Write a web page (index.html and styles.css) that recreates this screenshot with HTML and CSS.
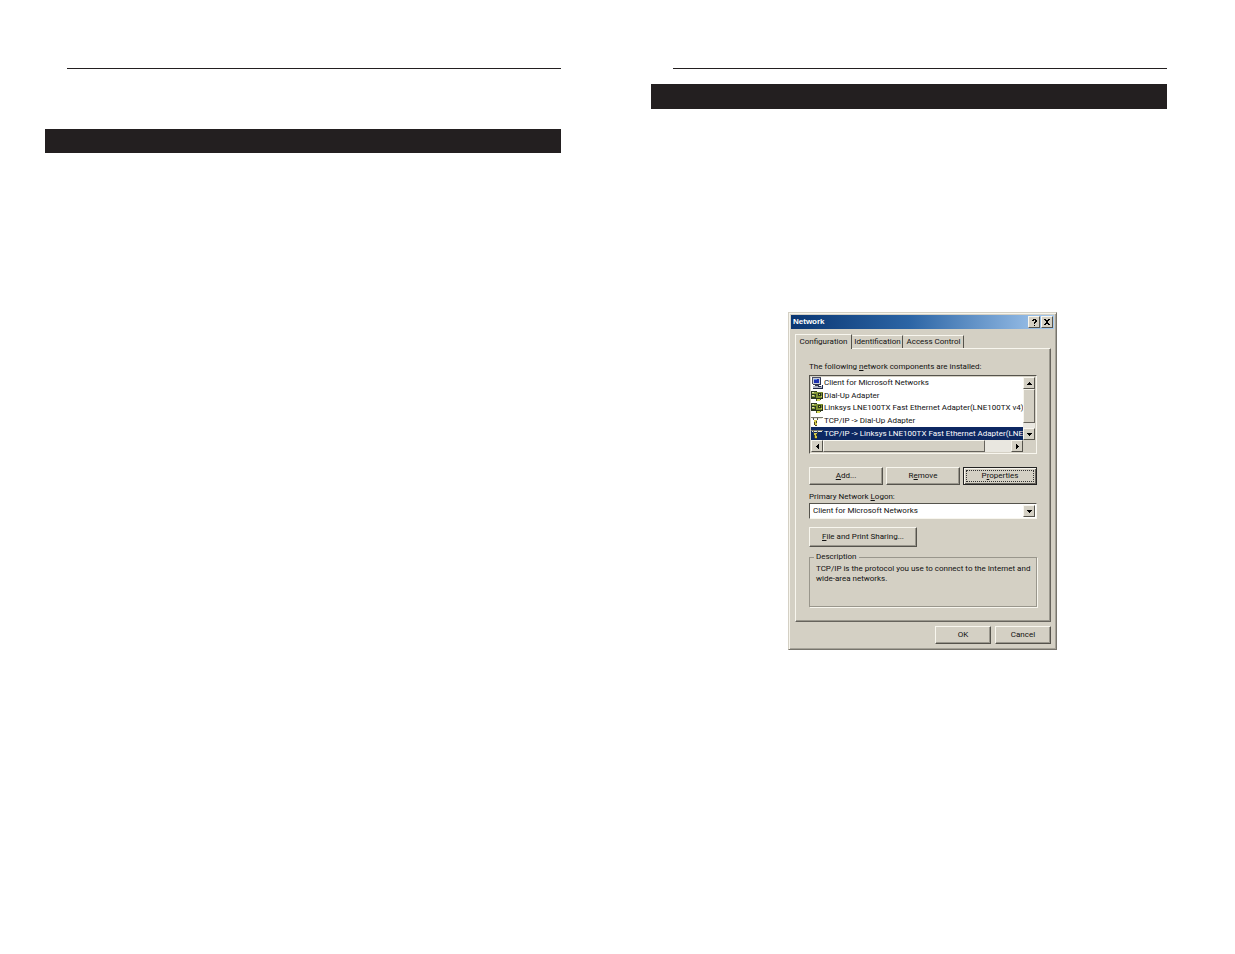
FILE: index.html
```html
<!DOCTYPE html>
<html lang="en">
<head>
<meta charset="utf-8">
<title>Network</title>
<link rel="stylesheet" href="styles.css">
</head>
<body>
<svg class="defs" aria-hidden="true">
  <symbol id="computer" viewBox="0 0 12 12">
    <path fill="#c8ccd8" d="M1 0h9v8H1z"/><path fill="#fff" d="M1 0h9v1H2v7H1z"/>
    <path fill="#1c2fb0" d="M3 2h5v4H3z"/><path fill="#5f8ee8" d="M3 2h3v1H3z"/>
    <path fill="#4a4f68" d="M1 0h9v1H1zM1 1h1v6H1z"/>
    <path fill="#33384f" d="M9 1h1v7H2V7h7zM4 8h4v1H4z"/>
    <path fill="#b4b8c8" d="M2 9h9v2H2z"/><path fill="#222a48" d="M2 11h9v1H2zM11 8h1v4h-1zM7 9h3v1H7z"/>
  </symbol>
  <symbol id="adapter" viewBox="0 0 12 12">
    <path fill="#2c3a20" d="M0 1h6v8H0z"/><path fill="#8ea13c" d="M1 2h4v2H1zM1 5h3v2H1z"/>
    <path fill="#dfe4a8" d="M1 2h2v1H1zM1 5h2v1H1z"/>
    <path fill="#7c9030" d="M5 2h7v6H5z"/><path fill="#26301c" d="M5 8h7v1H5zM11 3h1v5h-1zM7 3h3v3H7z"/>
    <path fill="#d5d95a" d="M8 4h1v1H8zM6 9h3v2H6zM10 6h1v1h-1z"/><path fill="#4a5a20" d="M5 9h1v2H5zM9 9h1v1H9z"/>
  </symbol>
  <symbol id="protocol" viewBox="0 0 12 12">
    <path fill="#77776c" d="M0 2h12v1H0z"/><path fill="#e8e6d8" d="M1 3h10v1H1z"/>
    <path fill="#55554a" d="M2 3h1v2H2zM6 3h1v2H6zM3 5h3v1H3z"/>
    <path fill="#d4c84a" d="M3 5h3v2H3zM4 7h2v3H4z"/><path fill="#4c4720" d="M3 7h1v3H3zM5 6h1v2H5zM4 10h2v1H4z"/>
  </symbol>
  <symbol id="down" viewBox="0 0 5 3"><path d="M0 0h5v1H4v1H3v1H2V2H1V1H0z"/></symbol>
  <symbol id="up" viewBox="0 0 5 3"><path d="M2 0h1v1h1v1h1v1H0V2h1V1h1z"/></symbol>
  <symbol id="left" viewBox="0 0 3 5"><path d="M3 0v5H2V4H1V3H0V2h1V1h1V0z"/></symbol>
  <symbol id="right" viewBox="0 0 3 5"><path d="M0 0v5h1V4h1V3h1V2H2V1H1V0z"/></symbol>
</svg>
<main class="spread">
  <section class="page page-left">
    <hr class="rule">
    <div class="bar"></div>
  </section>
  <section class="page page-right">
    <hr class="rule">
    <div class="bar"></div>
    <div class="dialog" role="dialog" aria-labelledby="title">
      <header class="titlebar">
        <h1 id="title">Network</h1>
        <button class="cap" aria-label="Help"><svg viewBox="0 0 5 7" width="5" height="7"><path d="M1 0h3v1h1v2H4v1H3v1H2V3h1V1H2v1H0V1h1zM2 6h1v1H2z"/></svg></button>
        <button class="cap" aria-label="Close"><svg viewBox="0 0 6 6" width="6" height="6"><path d="M0 0h2v1h2V0h2v1H5v1H4v2h1v1h1v1H4V5H2v1H0V5h1V4h1V2H1V1H0z"/></svg></button>
      </header>
      <div class="tabs" role="tablist">
        <button class="tab active" role="tab" aria-selected="true">Configuration</button>
        <button class="tab" role="tab">Identification</button>
        <button class="tab" role="tab">Access Control</button>
      </div>
      <div class="panel" role="tabpanel">
        <p class="label" id="components">The following <u>n</u>etwork components are installed:</p>
        <div class="listbox">
          <ul class="items" role="listbox" aria-labelledby="components">
            <li role="option"><svg><use href="#computer"/></svg>Client for Microsoft Networks</li>
            <li role="option"><svg><use href="#adapter"/></svg>Dial-Up Adapter</li>
            <li role="option"><svg><use href="#adapter"/></svg>Linksys LNE100TX Fast Ethernet Adapter(LNE100TX v4)</li>
            <li role="option"><svg><use href="#protocol"/></svg>TCP/IP -&gt; Dial-Up Adapter</li>
            <li role="option" class="selected" aria-selected="true"><svg><use href="#protocol"/></svg>TCP/IP -&gt; Linksys LNE100TX Fast Ethernet Adapter(LNE</li>
          </ul>
          <div class="scroll vertical">
            <button class="arrow" aria-label="Scroll up"><svg width="5" height="3"><use href="#up"/></svg></button>
            <div class="thumb"></div>
            <button class="arrow" aria-label="Scroll down"><svg width="5" height="3"><use href="#down"/></svg></button>
          </div>
          <div class="scroll horizontal">
            <button class="arrow" aria-label="Scroll left"><svg width="3" height="5"><use href="#left"/></svg></button>
            <div class="thumb"></div>
            <button class="arrow" aria-label="Scroll right"><svg width="3" height="5"><use href="#right"/></svg></button>
          </div>
        </div>
        <div class="actions">
          <button class="btn"><u>A</u>dd...</button>
          <button class="btn">R<u>e</u>move</button>
          <button class="btn default"><span>P<u>r</u>operties</span></button>
        </div>
        <label class="label" for="logon">Primary Network <u>L</u>ogon:</label>
        <div class="combo">
          <select id="logon"><option>Client for Microsoft Networks</option></select>
          <span class="arrow"><svg width="5" height="3"><use href="#down"/></svg></span>
        </div>
        <button class="btn sharing"><u>F</u>ile and Print Sharing...</button>
        <fieldset class="group">
          <legend>Description</legend>
          <p>TCP/IP is the protocol you use to connect to the Internet and wide-area networks.</p>
        </fieldset>
      </div>
      <footer class="footer">
        <button class="btn">OK</button>
        <button class="btn">Cancel</button>
      </footer>
    </div>
  </section>
</main>
</body>
</html>
```
FILE: styles.css
```css
* { box-sizing: border-box; }
body { margin: 0; background: #fff; color: #111; }
.defs { position: absolute; width: 0; height: 0; }
.spread {
  display: grid;
  grid-template-columns: 1fr 1fr;
  column-gap: 90px;
  padding: 68px 68px 40px 45px;
}
.rule { margin: 0 0 0 22px; border: 0; height: 1px; background: #231f20; }
.bar { height: 25px; background: #231f20; }
.page-left .bar { margin-top: 60px; height: 24px; }
.page-right .bar { margin-top: 15px; }

.dialog, .dialog button, .dialog select {
  font: 8px/10px Roboto, "Liberation Sans", Arial, sans-serif;
  color: #111;
}
.dialog {
  width: 269px;
  margin: 203px 0 0 137px;
  padding: 2px;
  background: #d4d0c4;
  border: 1px solid;
  border-color: #d4d0c4 #77746c #77746c #d4d0c4;
  box-shadow: inset 1px 1px #f6f4ec, inset -1px -1px #a5a298;
}
.dialog button { padding: 0; border-radius: 0; white-space: nowrap; }
.dialog p { margin: 0; }

.titlebar {
  display: flex;
  align-items: center;
  height: 14px;
  padding: 0 0 0 2px;
  background: linear-gradient(90deg, #0a3672, #2c65a5 45%, #a6caf0);
}
.titlebar h1 { flex: 1; margin: 0; font: bold 8px/12px "Liberation Sans", Arial, sans-serif; color: #fff; }
.cap, .arrow {
  display: flex;
  align-items: center;
  justify-content: center;
  flex: none;
  width: 12px;
  height: 12px;
  background: #d4d0c4;
  border: 1px solid;
  border-color: #f8f6ee #55534c #55534c #f8f6ee;
}
.cap { margin-right: 1px; }
.cap svg { flex: none; }

.tabs { display: flex; align-items: flex-end; height: 19px; padding: 0 4px; }
.tab {
  height: 13px;
  width: 51px;
  background: #d4d0c4;
  border: 1px solid;
  border-color: #f8f6ee #55534c transparent transparent;
  border-bottom: 0;
}
.tab:last-child { width: 61px; }
.tab.active {
  height: 15px;
  width: 57px;
  padding-bottom: 1px;
  border-left-color: #f8f6ee;
  position: relative;
  margin-bottom: -1px;
}
.panel {
  margin: 0 3px 0 4px;
  padding: 13px 13px 14px 13px;
  border: 1px solid;
  border-color: #f8f6ee #66635c #66635c #f8f6ee;
  box-shadow: inset -1px -1px #9a978d;
}
.label { display: block; line-height: 10px; }
.listbox {
  display: grid;
  grid-template-columns: 1fr 12px;
  grid-template-rows: 63px 12px;
  margin-top: 3px;
  padding: 1px;
  background: #d4d0c4;
  border: 1px solid;
  border-color: #55534c #f8f6ee #f8f6ee #55534c;
}
.items {
  display: grid;
  grid-template-rows: repeat(5, 1fr);
  margin: 0;
  padding: 0;
  list-style: none;
  min-width: 0;
  overflow: hidden;
  background: #fff;
}
.items li { display: flex; align-items: center; gap: 1px; min-width: 0; overflow: hidden; white-space: nowrap; }
.items svg { flex: none; width: 12px; height: 12px; }
.items .selected { background: #0d2862; color: #fff; }
.scroll { display: flex; background: #e9e7e0; }
.thumb { background: #d4d0c4; border: 1px solid; border-color: #f8f6ee #66635c #66635c #f8f6ee; }
.vertical { flex-direction: column; justify-content: space-between; }
.vertical .thumb { height: 34px; margin-bottom: auto; }
.horizontal .thumb { flex: 0 0 162px; margin-right: auto; }

.btn {
  height: 18px;
  background: #d4d0c4;
  border: 1px solid;
  border-color: #f8f6ee #55534c #55534c #f8f6ee;
  box-shadow: inset -1px -1px #9a978d;
}
.actions { display: grid; grid-template-columns: repeat(3, 1fr); gap: 3px; margin: 13px 0 7px; }
.default { display: flex; border-color: #222; box-shadow: inset 1px 1px #f8f6ee, inset -1px -1px #66635c; }
.dialog .default { padding: 2px; }
.default span { flex: 1; line-height: 10px; border: 1px dotted #333; }
.combo {
  display: grid;
  grid-template-columns: 1fr 12px;
  margin-top: 1px;
  padding: 1px;
  background: #fff;
  border: 1px solid;
  border-color: #55534c #f8f6ee #f8f6ee #55534c;
}
.combo select { appearance: none; border: 0; padding: 0 0 0 2px; background: #fff; min-width: 0; height: 12px; }
.combo .arrow { pointer-events: none; }
.sharing { display: block; width: 108px; height: 20px; margin-top: 8px; }
.group {
  min-width: 0;
  height: 55px;
  margin: 5px 0 0;
  padding: 0 4px;
  border: 1px solid #99968c;
  box-shadow: 1px 1px #f8f6ee;
}
.group legend { padding: 0 2px; line-height: 10px; }
.group p { padding-left: 2px; line-height: 10px; margin-top: 2px; }
.footer { display: flex; justify-content: flex-end; gap: 4px; padding: 4px 3px 3px; }
.footer .btn { width: 56px; }
```
